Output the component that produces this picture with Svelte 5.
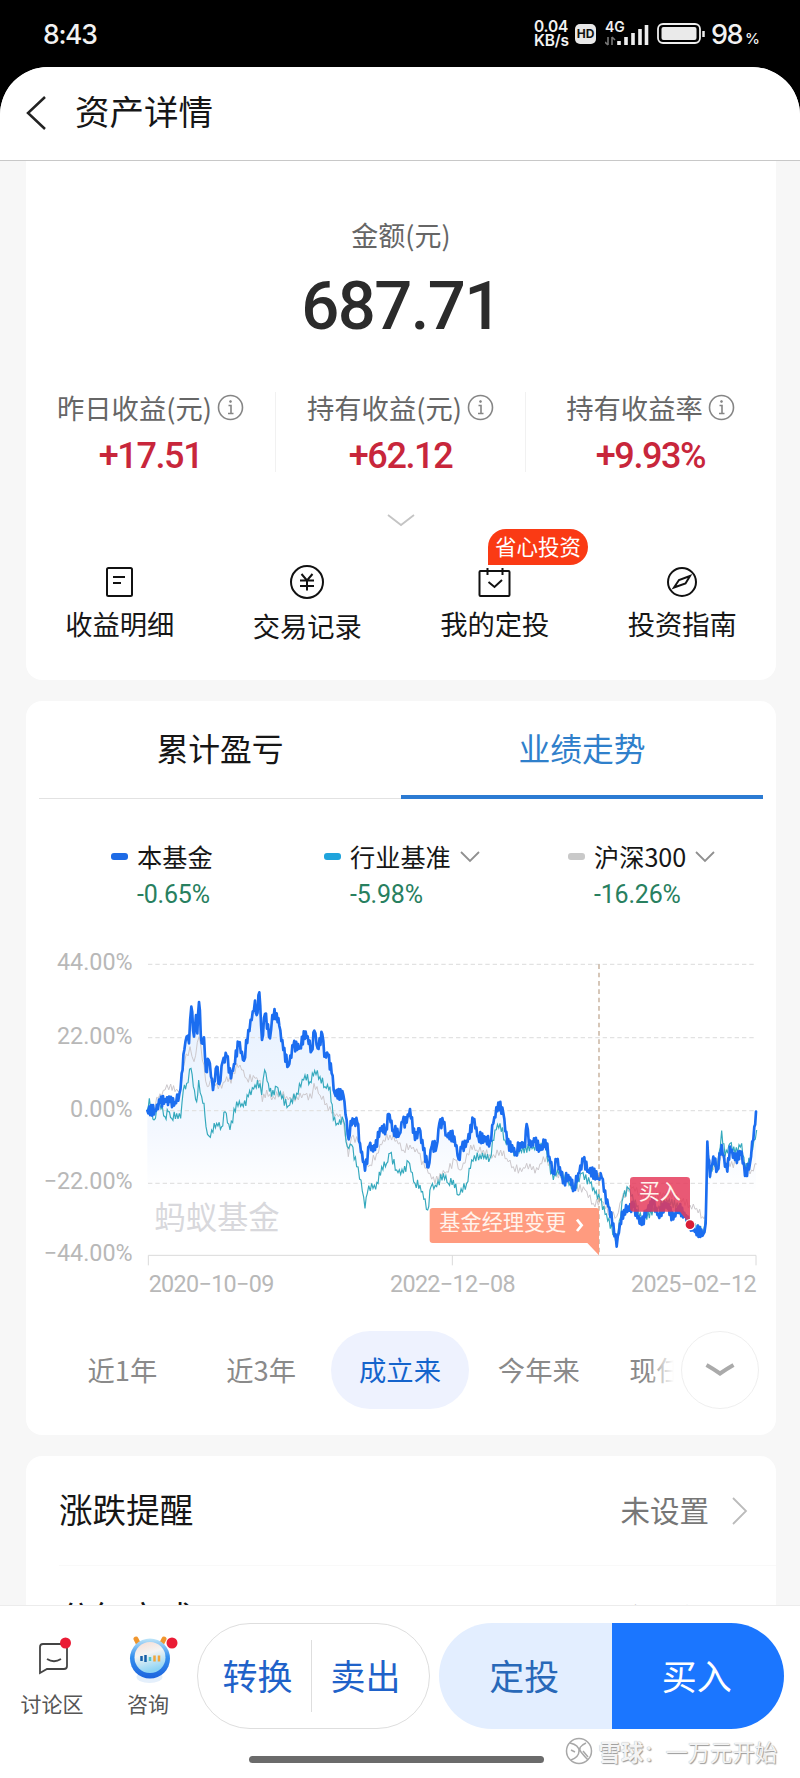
<script lang="ts">
  type Point = [number, number];

  const profits = [
    { label: '昨日收益(元)', value: '+17.51' },
    { label: '持有收益(元)', value: '+62.12' },
    { label: '持有收益率', value: '+9.93%' },
  ];

  const actions = [
    { label: '收益明细', icon: 'bill' },
    { label: '交易记录', icon: 'yuan' },
    { label: '我的定投', icon: 'calendar', badge: '省心投资' },
    { label: '投资指南', icon: 'compass' },
  ];

  const legends = [
    { label: '本基金', value: '-0.65%', tone: 'fund', more: false },
    { label: '行业基准', value: '-5.98%', tone: 'bench', more: true },
    { label: '沪深300', value: '-16.26%', tone: 'index', more: true },
  ];

  const ticks = [
    { label: '44.00%', y: 73 },
    { label: '22.00%', y: 293 },
    { label: '0.00%', y: 512 },
    { label: '−22.00%', y: 730 },
    { label: '−44.00%', y: 946 },
  ];

  const ranges = ['近1年', '近3年', '成立来', '今年来', '现任来'];
  let activeRange = $state('成立来');

  // x, y pairs in chart units
  const fund = parse(`52,512 75,510 90,488 105,478 120,486 135,488 148,462 155,400 163,330 170,290 177,310 184,200
    192,290 198,225 202,280 207,186 215,310 222,292 228,395 236,360 243,410 249,450 260,380 268,432 278,365 290,348
    303,415 312,372 326,308 342,362 355,270 365,240 375,182 380,225 388,157 396,300 405,222 420,295 427,225 440,220
    448,258 460,330 475,378 490,318 510,320 527,275 545,332 553,272 563,325 577,283 583,350 594,345 605,400 614,460
    640,465 650,540 656,598 662,543 682,548 690,610 705,692 718,618 735,630 750,565 768,568 776,522 790,570 808,583
    818,545 830,548 840,507 855,600 868,565 880,630 895,682 905,620 920,618 928,550 940,550 950,585 973,590 986,658
    995,625 1013,605 1030,537 1045,590 1080,605 1090,550 1105,488 1120,520 1132,610 1158,638 1170,610 1185,620
    1190,552 1197,615 1215,605 1232,630 1246,600 1258,650 1270,700 1280,660 1302,725 1315,705 1332,745 1345,700
    1360,662 1375,690 1405,710 1415,712 1422,755 1435,800 1450,850 1460,920 1470,850 1482,810 1510,800 1535,855
    1550,810 1570,790 1585,825 1610,790 1630,838 1645,800 1665,830 1680,855 1697,870 1720,882 1727,850 1732,605
    1740,710 1750,650 1762,690 1775,615 1785,680 1792,695 1800,620 1815,660 1835,635 1845,708 1860,670 1873,560 1878,515`);

  const bench = parse(`52,510 58,475 72,540 85,495 97,500 105,530 115,515 125,535 140,520 152,535 160,450 170,430
    183,385 190,440 200,485 206,420 215,470 222,490 228,560 237,588 245,570 260,550 275,560 285,515 300,570 320,485
    340,500 355,470 375,435 390,430 395,465 404,390 415,430 425,470 440,440 455,475 475,498 500,460 525,405 540,425
    554,392 570,410 585,440 600,440 610,540 622,550 640,540 652,620 665,615 680,680 693,720 705,805 712,760 725,730
    737,748 755,680 770,670 780,640 800,690 820,700 835,665 855,730 870,735 893,810 903,740 920,740 940,700 955,730
    970,720 985,765 1010,730 1025,660 1050,645 1080,655 1095,570 1110,550 1125,600 1155,635 1210,620 1245,620
    1270,720 1282,690 1310,720 1332,750 1355,700 1380,730 1410,780 1460,900 1480,770 1495,745 1520,800 1535,840
    1585,800 1610,780 1645,800 1680,850 1720,875 1727,830 1732,625 1740,715 1750,660 1762,690 1775,572 1785,650
    1800,610 1815,640 1835,610 1845,690 1860,660 1880,570`);

  const index = parse(`52,510 70,500 85,475 105,450 122,432 135,455 150,450 163,370 180,320 192,365 207,290 217,360
    232,440 245,420 260,430 275,445 290,410 303,430 320,370 340,390 350,415 375,415 390,420 397,485 410,450 425,480
    450,455 475,480 500,470 525,465 545,475 552,430 570,465 590,490 605,520 625,530 640,540 655,650 665,590 685,605
    700,670 720,675 740,640 760,600 780,585 800,600 820,630 840,615 865,640 885,685 900,700 915,730 930,700 950,695
    975,660 990,690 1005,670 1022,615 1040,630 1060,630 1085,655 1112,630 1130,655 1150,680 1175,695 1190,670
    1205,690 1225,690 1240,650 1260,670 1270,700 1300,710 1335,740 1365,750 1390,790 1415,785 1440,820 1460,830
    1475,780 1500,735 1530,760 1570,770 1620,760 1680,795 1700,805 1718,830 1727,820 1732,640 1750,690 1775,640
    1800,680 1835,650 1845,690 1865,690 1880,672`);

  function parse(raw: string): Point[] {
    return raw
      .trim()
      .split(/\s+/)
      .map((pair) => pair.split(',').map(Number) as Point);
  }

  // splits every segment and shakes it a little, so it reads as daily quotes
  function toPath(points: Point[], jitter: number, step: number) {
    const out: string[] = [];
    let n = 0;
    for (let i = 0; i < points.length - 1; i++) {
      const [x1, y1] = points[i];
      const [x2, y2] = points[i + 1];
      const steps = Math.max(1, Math.round((x2 - x1) / step));
      for (let s = 0; s < steps; s++) {
        const t = s / steps;
        const shake = s === 0 ? 0 : (n % 2 ? 1 : -1) * jitter * (0.3 + 0.7 * Math.abs(Math.sin(n * 12.9)));
        out.push(`${(x1 + (x2 - x1) * t).toFixed(1)},${(y1 + (y2 - y1) * t + shake).toFixed(1)}`);
        n++;
      }
    }
    out.push(points[points.length - 1].join(','));
    return 'M' + out.join('L');
  }

  const fundPath = toPath(fund, 16, 3);
  const benchPath = toPath(bench, 13, 4);
  const indexPath = toPath(index, 12, 5);
</script>

<div class="phone">
  <div class="status">
    <span class="time">8:43</span>
    <div class="status-right">
      <div class="speed"><span>0.04</span><span>KB/s</span></div>
      <span class="hd">HD</span>
      <svg class="signal" width="46" height="30" viewBox="0 -4 46 30">
        <text x="0" y="9" class="net">4G</text>
        <path d="M3 14v8M3 22l-3-3M7 22v-8M7 14l3 3" stroke="#777" stroke-width="1.600" fill="none" />
        <path d="M14 18v4M21 14v8M28 10v12M35 6v16M41.500 2v20" stroke="#eee" stroke-width="3.600" />
      </svg>
      <svg class="battery" width="49" height="22" viewBox="0 0 49 22">
        <rect x="1" y="1" width="42" height="19" rx="5" fill="none" stroke="#eee" stroke-width="1.800" />
        <rect x="4.500" y="4" width="35" height="13" rx="2" fill="#eaeaea" />
        <path d="M46.500 8v6" stroke="#eee" stroke-width="2.500" />
      </svg>
      <span class="percent">98<small>%</small></span>
    </div>
  </div>

  <div class="screen">
    <header>
      <svg width="22" height="36" viewBox="0 0 22 36"><path d="M20 2L3 18l17 16" fill="none" stroke="#222" stroke-width="2.500" /></svg>
      <h1>资产详情</h1>
    </header>

    <main>
      <section class="card summary">
        <div class="amount-label">金额(元)</div>
        <div class="amount">687.71</div>
        <div class="profits">
          {#each profits as item (item.label)}
            <div class="profit">
              <div class="profit-label">
                {item.label}
                <svg width="27" height="27" viewBox="0 0 27 27" fill="none" stroke="#858585" stroke-width="1.600">
                  <circle cx="13.500" cy="13.500" r="12" />
                  <path d="M11.500 11.500h2.500v8M11 19.500h5.500" />
                  <circle cx="13.500" cy="7.500" r="1" fill="#858585" stroke-width="0.800" />
                </svg>
              </div>
              <div class="profit-value">{item.value}</div>
            </div>
          {/each}
        </div>
        <svg class="expand" width="28" height="13" viewBox="0 0 28 13"><path d="M1 1l13 10L27 1" fill="none" stroke="#c4c4c4" stroke-width="1.800" /></svg>
        <div class="actions">
          {#each actions as action (action.label)}
            <div class="action {action.icon}">
              <svg width="36" height="36" viewBox="0 0 36 36" fill="none" stroke="#111" stroke-width="2">
                {#if action.icon === 'bill'}
                  <rect x="5" y="4" width="25" height="28" rx="1.500" />
                  <path d="M11 13h12M11 19h8" />
                {:else if action.icon === 'yuan'}
                  <circle cx="18" cy="18" r="16" />
                  <path d="M12.500 10l5.500 6.500 5.500-6.500M11 16.500h14M11 22h14M18 16.500v10" />
                {:else if action.icon === 'calendar'}
                  <rect x="2.500" y="7" width="30" height="25" rx="1" />
                  <path d="M10.500 4v7M25.500 4v7M11.500 18l6 5 7.500-7" />
                {:else}
                  <circle cx="18" cy="18" r="14" />
                  <path d="M26 12l-4.500 7.500-11.500 4L15 16z" />
                {/if}
              </svg>
              <span>{action.label}</span>
              {#if action.badge}
                <em class="badge">{action.badge}</em>
              {/if}
            </div>
          {/each}
        </div>
      </section>

      <section class="card trend">
        <div class="tabs">
          <div class="tab">累计盈亏</div>
          <div class="tab active">业绩走势</div>
        </div>
        <div class="legends">
          {#each legends as item (item.label)}
            <div class="legend {item.tone}">
              <i></i>
              <div class="legend-name">
                {item.label}
                {#if item.more}
                  <svg width="20" height="12" viewBox="0 0 20 12"><path d="M1 1l9 9 9-9" fill="none" stroke="#909090" stroke-width="1.800" /></svg>
                {/if}
              </div>
              <div class="legend-value">{item.value}</div>
            </div>
          {/each}
        </div>

        <svg class="chart" width="750" height="370" viewBox="-312 0 2250 1110">
          <defs>
            <linearGradient id="area" gradientUnits="userSpaceOnUse" x1="0" y1="160" x2="0" y2="760">
              <stop offset="0" stop-color="#e6f1ff" />
              <stop offset="0.700" stop-color="#f4f8ff" />
              <stop offset="1" stop-color="#fff" />
            </linearGradient>
          </defs>
          <path d="{fundPath}V760H52Z" fill="url(#area)" />
          {#each ticks as tick (tick.label)}
            <text class="tick" x="8" y={tick.y + 18} text-anchor="end">{tick.label}</text>
            {#if tick.y < 900}
              <path d="M54 {tick.y}H1878" stroke="#e2e2e2" stroke-width="4" stroke-dasharray="13 9" />
            {/if}
          {/each}
          <path d="M55 976V946H1878V976M967 946v30" fill="none" stroke="#dadada" stroke-width="3" />
          <text class="mark" x="73" y="868">蚂蚁基金</text>
          <path d={indexPath} fill="none" stroke="#ccc8cc" stroke-width="3" />
          <path d={benchPath} fill="none" stroke="#35a9bd" stroke-width="3.500" />
          <path d={fundPath} fill="none" stroke="#1b6df0" stroke-width="8" stroke-linejoin="round" stroke-linecap="round" />
          <path d="M1407 73V946" stroke="#b99f86" stroke-width="3.500" stroke-dasharray="14 11" />
          <path d="M908 804H1400q7 0 7 7V946L1372 909H908q-9 0-9-9V813q0-9 9-9Z" fill="#ff9678" fill-opacity="0.950" />
          <text class="flag" x="928" y="870">基金经理变更</text>
          <path d="M1341 839l14 17-14 17" fill="none" stroke="#fff" stroke-width="8" />
          <path d="M1510 711H1670q10 0 10 10V854L1650 815H1510q-10 0-10-10V721q0-10 10-10Z" fill="#e5395a" fill-opacity="0.840" />
          <text class="flag" x="1526" y="776">买入</text>
          <circle cx="1680" cy="854" r="17" fill="#fff" />
          <circle cx="1680" cy="854" r="13" fill="#d81e36" />
          <text class="date" x="56" y="1057" textLength="377">2020−10−09</text>
          <text class="date" x="780" y="1057" textLength="377">2022−12−08</text>
          <text class="date" x="1503" y="1057" textLength="377">2025−02−12</text>
        </svg>

        <div class="ranges">
          {#each ranges as range (range)}
            <button type="button" class:on={activeRange === range} onclick={() => (activeRange = range)}>{range}</button>
          {/each}
          <div class="more">
            <span><svg width="30" height="14" viewBox="0 0 30 14"><path d="M1.500 2q7 4 13.500 8.500Q21.500 6 28.500 2" fill="none" stroke="#aaa" stroke-width="4" /></svg></span>
          </div>
        </div>
      </section>

      <section class="card settings">
        <div class="row">
          <strong>涨跌提醒</strong>
          <span>未设置</span>
          <svg width="16" height="28" viewBox="0 0 16 28"><path d="M1 1l13 13L1 27" fill="none" stroke="#bbb" stroke-width="1.800" /></svg>
        </div>
        <div class="row">
          <strong>分红方式</strong>
          <span>现金分红</span>
          <svg width="16" height="28" viewBox="0 0 16 28"><path d="M1 1l13 13L1 27" fill="none" stroke="#bbb" stroke-width="1.800" /></svg>
        </div>
      </section>
    </main>

    <footer>
      <div class="bar">
        <div class="shortcut">
          <svg width="40" height="52" viewBox="-2 0 40 52">
            <path d="M7 13h21q3 0 3 3v19q0 3-3 3H11l-7 4V16q0-3 3-3z" fill="none" stroke="#444" stroke-width="1.800" />
            <path d="M11 28q7 4.500 14 0" fill="none" stroke="#444" stroke-width="1.800" />
            <circle cx="29.500" cy="12" r="5.500" fill="#ea1c35" />
          </svg>
          <span>讨论区</span>
        </div>
        <div class="shortcut">
          <svg width="56" height="52" viewBox="-1.500 0 56 52">
            <defs>
              <linearGradient id="ring" x1="0" y1="0" x2="0" y2="1">
                <stop offset="0" stop-color="#bfe6f8" />
                <stop offset="0.450" stop-color="#3590ef" />
                <stop offset="1" stop-color="#1c63dd" />
              </linearGradient>
              <linearGradient id="face" x1="0" y1="0" x2="0.300" y2="1">
                <stop offset="0" stop-color="#f7dcd2" />
                <stop offset="0.450" stop-color="#f4f4f3" />
                <stop offset="1" stop-color="#8ed4f5" />
              </linearGradient>
            </defs>
            <ellipse cx="26" cy="46" rx="13" ry="6" fill="#e4effb" />
            <path d="M12.500 8l5 10M40.500 8l-5 10" stroke="#f0962e" stroke-width="5" stroke-linecap="round" />
            <circle cx="26.500" cy="27.500" r="20" fill="url(#ring)" />
            <circle cx="26.500" cy="26.500" r="15.500" fill="url(#face)" />
            <path d="M18 25v5M22 24v7" stroke="#175fa8" stroke-width="2.500" />
            <path d="M26.500 26v4" stroke="#54c5c4" stroke-width="2.500" />
            <path d="M31 24.500v6M35.500 24.500v6" stroke="#f0a63c" stroke-width="2.500" />
            <circle cx="48.500" cy="12" r="5.500" fill="#ea1c35" />
          </svg>
          <span>咨询</span>
        </div>
        <div class="outline-group">
          <button type="button">转换</button>
          <button type="button">卖出</button>
        </div>
        <div class="solid-group">
          <button type="button" class="plan">定投</button>
          <button type="button" class="buy">买入</button>
        </div>
      </div>
      <div class="home"></div>
      <div class="source">
        <svg width="28" height="28" viewBox="0 0 28 28" fill="none" stroke="#a8a8a8" stroke-width="1.500">
          <circle cx="14" cy="14" r="12.500" />
          <path d="M5 6q9 2 9 8t-8 9M21 6q-9 4-5 9t7 8M6 13l4 2M18 14l5 6" />
        </svg>
        <b>雪球</b><span>：一万元开始</span>
      </div>
    </footer>
  </div>
</div>

<style>
  :global(body) {
    background: #000;
  }

  .phone {
    width: 800px;
    height: 1778px;
    overflow: hidden;
    display: flex;
    flex-direction: column;
    font-family: 'Noto Sans CJK SC', sans-serif;
    color: #161616;
  }

  button {
    padding: 0;
    border: none;
    background: none;
    font: inherit;
    color: inherit;
  }

  svg {
    display: block;
    flex: none;
  }

  .status {
    height: 67px;
    flex: none;
    box-sizing: border-box;
    padding: 1px 42px 0 43px;
    background: #000;
    color: #f2f2f2;
    display: flex;
    justify-content: space-between;
    align-items: center;
    font-family: Inter, sans-serif;
  }

  .time {
    font-size: 26.500px;
    font-weight: 500;
    letter-spacing: -1.300px;
  }

  .status-right {
    display: flex;
    align-items: center;
  }

  .speed {
    width: 36px;
    display: flex;
    flex-direction: column;
    font-size: 15.500px;
    line-height: 14px;
    font-weight: 600;
    letter-spacing: -0.200px;
  }

  .hd {
    width: 21px;
    height: 20px;
    margin: 0 9px 0 5px;
    border-radius: 5px;
    background: #e8e8e8;
    color: #111;
    font-size: 12px;
    font-weight: 700;
    line-height: 20px;
    text-align: center;
  }

  .net {
    font: 600 14px Inter, sans-serif;
    fill: #f0f0f0;
  }

  .signal {
    margin-right: 6px;
  }

  .percent {
    margin-left: 5px;
    width: 47px;
    font-size: 27px;
    font-weight: 500;
    letter-spacing: -1.500px;
    white-space: nowrap;
  }

  .percent small {
    margin-left: 3px;
    font-size: 15px;
  }

  .screen {
    flex: 1;
    min-height: 0;
    display: flex;
    flex-direction: column;
    border-radius: 48px 48px 0 0;
    overflow: hidden;
    background: #f7f7f7;
  }

  header {
    height: 94px;
    flex: none;
    box-sizing: border-box;
    padding: 0 25px 1px;
    border-bottom: 1px solid #c8c8c8;
    background: #fff;
    display: flex;
    align-items: center;
    gap: 28px;
  }

  h1 {
    margin: 0 0 7px;
    font-size: 34.500px;
    line-height: 40px;
    font-weight: 400;
  }

  main {
    flex: 1;
    min-height: 0;
    overflow: hidden;
    padding: 0 24px 0 26px;
    display: flex;
    flex-direction: column;
  }

  .card {
    flex: none;
    background: #fff;
    border-radius: 16px;
    box-sizing: border-box;
  }

  .summary {
    height: 519px;
    margin-bottom: 21px;
    padding-top: 54px;
    border-radius: 0 0 16px 16px;
    display: flex;
    flex-direction: column;
    align-items: center;
  }

  .amount-label {
    font-size: 27px;
    line-height: 40px;
    color: #666;
  }

  .amount {
    margin-top: 13px;
    font: 500 67px/76px Roboto, sans-serif;
    color: #2b2b2b;
    letter-spacing: -1.600px;
  }

  .profits {
    width: 100%;
    margin-top: 48px;
    display: grid;
    grid-template-columns: repeat(3, 1fr);
  }

  .profit {
    height: 80px;
    display: flex;
    flex-direction: column;
    align-items: center;
    border-right: 1px solid #f1f1f1;
  }

  .profit:last-child {
    border-right-color: transparent;
  }

  .profit-label {
    display: flex;
    align-items: center;
    gap: 5px;
    font-size: 27.300px;
    line-height: 30px;
    color: #666;
    white-space: nowrap;
  }

  .profit-value {
    margin-top: 12px;
    font: 500 36px/44px Roboto, sans-serif;
    color: #c8263b;
    letter-spacing: -1.400px;
  }

  .expand {
    margin-top: 42px;
  }

  .actions {
    width: 100%;
    margin-top: 37px;
    display: grid;
    grid-template-columns: repeat(4, 1fr);
  }

  .action {
    position: relative;
    display: flex;
    flex-direction: column;
    align-items: center;
    gap: 5px;
    font-size: 27.300px;
    line-height: 36px;
  }

  .action.yuan {
    gap: 7px;
  }

  .badge {
    position: absolute;
    left: 87px;
    top: -35px;
    width: 100px;
    height: 36px;
    border-radius: 18px 18px 18px 0;
    background: #fa3a14;
    color: #fff;
    font-size: 21.500px;
    font-style: normal;
    line-height: 34px;
    text-align: center;
  }

  .trend {
    height: 734px;
    margin-bottom: 21px;
    display: flex;
    flex-direction: column;
  }

  .tabs {
    margin: 0 13px;
    height: 98px;
    flex: none;
    display: flex;
  }

  .tab {
    flex: 1;
    box-sizing: border-box;
    font-size: 31.800px;
    line-height: 92px;
    text-align: center;
    box-shadow: inset 0 -1px #e2e2e2;
  }

  .tab.active {
    color: #2f80cb;
    box-shadow: inset 0 -4px #2c7bd3;
  }

  .legends {
    height: 141px;
    flex: none;
    box-sizing: border-box;
    padding: 39px 0 0 85px;
    display: grid;
    grid-template-columns: 213px 244px auto;
  }

  .legend {
    display: grid;
    grid-template-columns: 17px auto;
    column-gap: 9px;
    align-content: start;
    align-items: center;
  }

  .legend i {
    height: 7px;
    margin-bottom: 1px;
    border-radius: 3px;
    background: #c9c9c9;
  }

  .fund i {
    background: #1e6be6;
  }

  .bench i {
    background: #1fa4dc;
  }

  .legend-name {
    display: flex;
    align-items: center;
    gap: 9px;
    font-size: 25.200px;
    line-height: 37px;
  }

  .legend-value {
    grid-column: 2;
    font: 400 25px/40px Roboto, sans-serif;
    color: #28805f;
    letter-spacing: -0.200px;
  }

  .tick,
  .date {
    font: 400 70px Roboto, sans-serif;
    fill: #b8b8b8;
  }

  .mark {
    font-size: 94px;
    fill: #d8d8dc;
  }

  .flag {
    font-size: 63.500px;
    fill: #fff3ec;
  }

  .ranges {
    position: relative;
    height: 78px;
    margin-top: 21px;
    padding-left: 27px;
    overflow: hidden;
    display: flex;
  }

  .ranges button {
    width: 138.800px;
    flex: none;
    padding-bottom: 3px;
    border-radius: 39px;
    font-size: 27.300px;
    color: #8a8a8a;
  }

  .ranges button:nth-child(5) {
    width: 124px;
  }

  .ranges button.on {
    background: #eef2fe;
    color: #1464cc;
  }

  .more {
    position: absolute;
    right: 0;
    top: 0;
    width: 128px;
    height: 78px;
    box-sizing: border-box;
    padding-left: 33px;
    background: linear-gradient(to right, #fff0, #fff 26px);
  }

  .more span {
    width: 78px;
    height: 78px;
    box-sizing: border-box;
    border: 1px solid #efefef;
    border-radius: 50%;
    display: flex;
    align-items: center;
    justify-content: center;
  }

  .settings {
    height: 400px;
  }

  .row {
    height: 110px;
    box-sizing: border-box;
    margin-left: 33px;
    padding-right: 28px;
    border-bottom: 1px solid #f9f9f9;
    display: flex;
    align-items: center;
    font-size: 29.500px;
    line-height: 40px;
    color: #777;
  }

  .row + .row {
    height: 106px;
  }

  .row strong {
    flex: 1;
    margin-bottom: 3px;
    font-size: 33.600px;
    font-weight: 400;
    color: #161616;
  }

  .row span {
    margin-bottom: 3px;
  }

  .row svg {
    margin-left: 23px;
  }

  footer {
    position: relative;
    height: 173px;
    flex: none;
    box-sizing: border-box;
    border-top: 1px solid #ececec;
    background: #fff;
  }

  .bar {
    height: 106px;
    padding: 17px 16px 0 4px;
    display: flex;
  }

  .shortcut {
    width: 96px;
    padding-top: 8px;
    display: flex;
    flex-direction: column;
    align-items: center;
    font-size: 21px;
    line-height: 30px;
    color: #555;
  }

  .shortcut svg {
    margin-left: 3px;
  }

  .shortcut span {
    margin-top: 5px;
  }

  .outline-group,
  .solid-group {
    box-sizing: border-box;
    border-radius: 53px;
    overflow: hidden;
    display: flex;
    align-items: center;
    font-size: 35px;
  }

  .outline-group {
    width: 233px;
    margin-left: 1px;
    border: 1px solid #dedede;
    color: #1f62c9;
  }

  .outline-group button {
    flex: 1;
    height: 72px;
    padding-bottom: 4px;
  }

  .outline-group button + button {
    border-left: 1px solid #dedede;
    padding-right: 10px;
  }

  .outline-group button:first-child {
    padding-left: 6px;
  }

  .solid-group {
    width: 345px;
    margin-left: 9px;
  }

  .solid-group button {
    flex: 1;
    height: 106px;
    padding: 0 2px 4px 0;
  }

  .plan {
    background: #e3eeff;
    color: #2868b8;
  }

  .buy {
    background: #1b76ff;
    color: #fff;
  }

  .home {
    width: 295px;
    height: 7px;
    margin: 27px 0 0 249px;
    border-radius: 4px;
    background: #6b6b6b;
  }

  .source {
    position: absolute;
    right: 23px;
    bottom: 10px;
    display: flex;
    align-items: center;
    font-size: 22.300px;
    line-height: 34px;
    color: #f4f4f4;
    text-shadow: 1px 1px 1px #999, 0 0 1px #aaa;
  }

  .source svg {
    margin-right: 6px;
  }
</style>
